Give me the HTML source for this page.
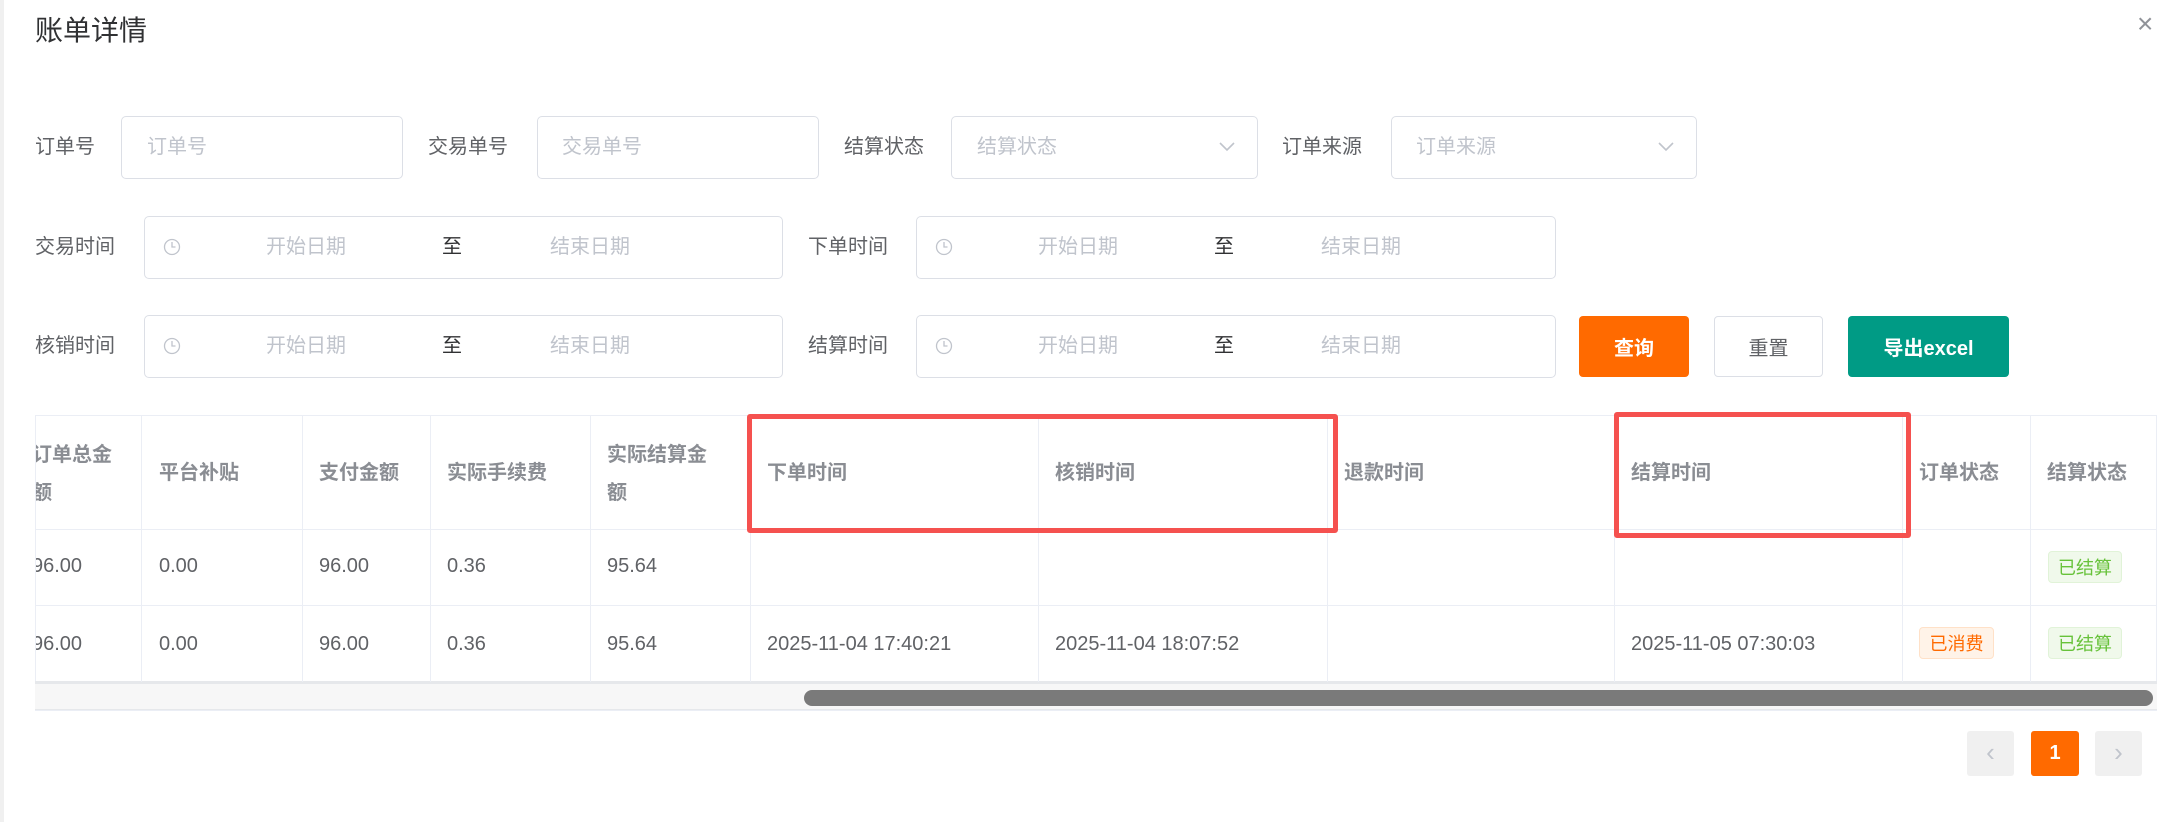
<!DOCTYPE html>
<html><head><meta charset="utf-8"><style>
*{box-sizing:border-box;margin:0;padding:0}
body{width:2174px;height:822px;background:#fff;font-family:"Liberation Sans","Noto Sans CJK SC",sans-serif;position:relative;overflow:hidden;color:#606266}
.a{position:absolute}
.lbl{position:absolute;font-size:20px;color:#606266;line-height:28px}
.inp{position:absolute;border:1px solid #dcdfe6;border-radius:5px;background:#fff}
.ph{position:absolute;font-size:20px;color:#c0c4cc;line-height:28px}
.btn{position:absolute;border-radius:4px;font-size:20px;font-weight:bold;display:flex;align-items:center;justify-content:center}
.th,.td{position:absolute;font-size:20px;line-height:36px;white-space:nowrap}
.th{color:#8a8d93;font-weight:bold}
.vl{position:absolute;width:1px;background:#ebeef5}
.hl{position:absolute;height:1px;background:#ebeef5}
.tag{position:absolute;font-size:18px;border-radius:4px;display:flex;align-items:center;justify-content:center}
.red{position:absolute;border:5px solid #f5514f;border-radius:3px}
</style></head><body>
<div class="a" style="left:0;top:0;width:4px;height:822px;background:#f0f0f0"></div>
<div class="a" style="left:35px;top:12px;font-size:28px;color:#303133;line-height:38px">账单详情</div>
<div class="a" style="left:2137px;top:8px;font-size:28px;color:#909399">×</div>

<!-- row1 -->
<div class="lbl" style="left:35px;top:133px">订单号</div>
<div class="inp" style="left:121px;top:116px;width:282px;height:63px"></div>
<div class="ph" style="left:147px;top:133px">订单号</div>
<div class="lbl" style="left:428px;top:133px">交易单号</div>
<div class="inp" style="left:537px;top:116px;width:282px;height:63px"></div>
<div class="ph" style="left:562px;top:133px">交易单号</div>
<div class="lbl" style="left:844px;top:133px">结算状态</div>
<div class="inp" style="left:951px;top:116px;width:307px;height:63px"></div>
<div class="ph" style="left:977px;top:133px">结算状态</div>
<svg class="a" style="left:1218px;top:141px" width="18" height="12"><path d="M2 2l7 7 7-7" fill="none" stroke="#c0c4cc" stroke-width="1.6"/></svg>
<div class="lbl" style="left:1282px;top:133px">订单来源</div>
<div class="inp" style="left:1391px;top:116px;width:306px;height:63px"></div>
<div class="ph" style="left:1416px;top:133px">订单来源</div>
<svg class="a" style="left:1657px;top:141px" width="18" height="12"><path d="M2 2l7 7 7-7" fill="none" stroke="#c0c4cc" stroke-width="1.6"/></svg>

<div class="lbl" style="left:35px;top:233px">交易时间</div>
<div class="lbl" style="left:808px;top:233px">下单时间</div>
<div class="lbl" style="left:35px;top:332px">核销时间</div>
<div class="lbl" style="left:808px;top:332px">结算时间</div>

<div class="inp" style="left:144px;top:216px;width:639px;height:63px"></div>
<div class="inp" style="left:916px;top:216px;width:640px;height:63px"></div>
<div class="inp" style="left:144px;top:315px;width:639px;height:63px"></div>
<div class="inp" style="left:916px;top:315px;width:640px;height:63px"></div>

<svg class="a" style="left:163px;top:238px" width="18" height="18"><circle cx="9" cy="9" r="7.5" fill="none" stroke="#c0c4cc" stroke-width="1.3"/><path d="M9 4v5h3.5" fill="none" stroke="#c0c4cc" stroke-width="1.3"/></svg>
<div class="ph" style="left:266px;top:233px">开始日期</div>
<div class="lbl" style="left:442px;top:233px;color:#303133">至</div>
<div class="ph" style="left:550px;top:233px">结束日期</div>

<svg class="a" style="left:935px;top:238px" width="18" height="18"><circle cx="9" cy="9" r="7.5" fill="none" stroke="#c0c4cc" stroke-width="1.3"/><path d="M9 4v5h3.5" fill="none" stroke="#c0c4cc" stroke-width="1.3"/></svg>
<div class="ph" style="left:1038px;top:233px">开始日期</div>
<div class="lbl" style="left:1214px;top:233px;color:#303133">至</div>
<div class="ph" style="left:1321px;top:233px">结束日期</div>

<svg class="a" style="left:163px;top:337px" width="18" height="18"><circle cx="9" cy="9" r="7.5" fill="none" stroke="#c0c4cc" stroke-width="1.3"/><path d="M9 4v5h3.5" fill="none" stroke="#c0c4cc" stroke-width="1.3"/></svg>
<div class="ph" style="left:266px;top:332px">开始日期</div>
<div class="lbl" style="left:442px;top:332px;color:#303133">至</div>
<div class="ph" style="left:550px;top:332px">结束日期</div>

<svg class="a" style="left:935px;top:337px" width="18" height="18"><circle cx="9" cy="9" r="7.5" fill="none" stroke="#c0c4cc" stroke-width="1.3"/><path d="M9 4v5h3.5" fill="none" stroke="#c0c4cc" stroke-width="1.3"/></svg>
<div class="ph" style="left:1038px;top:332px">开始日期</div>
<div class="lbl" style="left:1214px;top:332px;color:#303133">至</div>
<div class="ph" style="left:1321px;top:332px">结束日期</div>

<div class="btn" style="left:1579px;top:316px;width:110px;height:61px;background:#ff6a00;color:#fff">查询</div>
<div class="btn" style="left:1714px;top:316px;width:109px;height:61px;border:1px solid #dcdfe6;color:#606266;font-weight:normal">重置</div>
<div class="btn" style="left:1848px;top:316px;width:161px;height:61px;background:#009b85;color:#fff">导出excel</div>

<!-- table -->
<div class="a" style="left:35px;top:415px;width:2122px;height:296px;border:1px solid #ebeef5"></div>
<div class="hl" style="left:35px;top:529px;width:2122px"></div>
<div class="hl" style="left:35px;top:605px;width:2122px"></div>
<div class="a" style="left:35px;top:681px;width:2122px;height:3px;background:#e6e8eb"></div>
<div class="a" style="left:35px;top:684px;width:2122px;height:26px;background:#f7f7f7"></div>
<div class="hl" style="left:35px;top:709px;width:2122px;background:#e6e8eb"></div>
<div class="a" style="left:804px;top:690px;width:1349px;height:16px;border-radius:8px;background:#7a7a7a"></div>

<div class="vl" style="left:141px;top:416px;height:266px"></div>
<div class="vl" style="left:302px;top:416px;height:266px"></div>
<div class="vl" style="left:430px;top:416px;height:266px"></div>
<div class="vl" style="left:590px;top:416px;height:266px"></div>
<div class="vl" style="left:750px;top:416px;height:266px"></div>
<div class="vl" style="left:1038px;top:416px;height:266px"></div>
<div class="vl" style="left:1327px;top:416px;height:266px"></div>
<div class="vl" style="left:1614px;top:416px;height:266px"></div>
<div class="vl" style="left:1902px;top:416px;height:266px"></div>
<div class="vl" style="left:2030px;top:416px;height:266px"></div>

<div class="a" style="left:36px;top:416px;width:105px;height:266px;overflow:hidden">
 <div class="th" style="left:-4px;top:20px;line-height:38px;white-space:normal;width:110px">订单总金<br>额</div>
 <div class="td" style="left:-4px;top:132px">96.00</div>
 <div class="td" style="left:-4px;top:210px">96.00</div>
</div>
<div class="th" style="left:159px;top:455px">平台补贴</div>
<div class="th" style="left:319px;top:455px">支付金额</div>
<div class="th" style="left:447px;top:455px">实际手续费</div>
<div class="th" style="left:607px;top:436px;line-height:38px">实际结算金<br>额</div>
<div class="th" style="left:767px;top:455px">下单时间</div>
<div class="th" style="left:1055px;top:455px">核销时间</div>
<div class="th" style="left:1344px;top:455px">退款时间</div>
<div class="th" style="left:1631px;top:455px">结算时间</div>
<div class="th" style="left:1919px;top:455px">订单状态</div>
<div class="th" style="left:2047px;top:455px">结算状态</div>

<div class="td" style="left:159px;top:548px">0.00</div>
<div class="td" style="left:319px;top:548px">96.00</div>
<div class="td" style="left:447px;top:548px">0.36</div>
<div class="td" style="left:607px;top:548px">95.64</div>
<div class="tag" style="left:2048px;top:551px;width:74px;height:32px;background:#f0f9eb;border:1px solid #e1f3d8;color:#67c23a">已结算</div>

<div class="td" style="left:159px;top:626px">0.00</div>
<div class="td" style="left:319px;top:626px">96.00</div>
<div class="td" style="left:447px;top:626px">0.36</div>
<div class="td" style="left:607px;top:626px">95.64</div>
<div class="td" style="left:767px;top:626px">2025-11-04 17:40:21</div>
<div class="td" style="left:1055px;top:626px">2025-11-04 18:07:52</div>
<div class="td" style="left:1631px;top:626px">2025-11-05 07:30:03</div>
<div class="tag" style="left:1919px;top:627px;width:75px;height:32px;background:#fff3e8;border:1px solid #ffe1c8;color:#ff6a00">已消费</div>
<div class="tag" style="left:2048px;top:627px;width:74px;height:32px;background:#f0f9eb;border:1px solid #e1f3d8;color:#67c23a">已结算</div>

<div class="red" style="left:747px;top:414px;width:591px;height:119px"></div>
<div class="red" style="left:1614px;top:412px;width:297px;height:126px"></div>

<div class="a" style="left:1967px;top:731px;width:47px;height:45px;background:#f0f0f0;border-radius:3px;color:#c0c4cc;font-size:26px;text-align:center;line-height:43px">‹</div>
<div class="a" style="left:2031px;top:731px;width:48px;height:45px;background:#ff6a00;border-radius:3px;color:#fff;font-size:20px;font-weight:bold;text-align:center;line-height:45px">1</div>
<div class="a" style="left:2095px;top:731px;width:47px;height:45px;background:#f0f0f0;border-radius:3px;color:#c0c4cc;font-size:26px;text-align:center;line-height:43px">›</div>
</body></html>
